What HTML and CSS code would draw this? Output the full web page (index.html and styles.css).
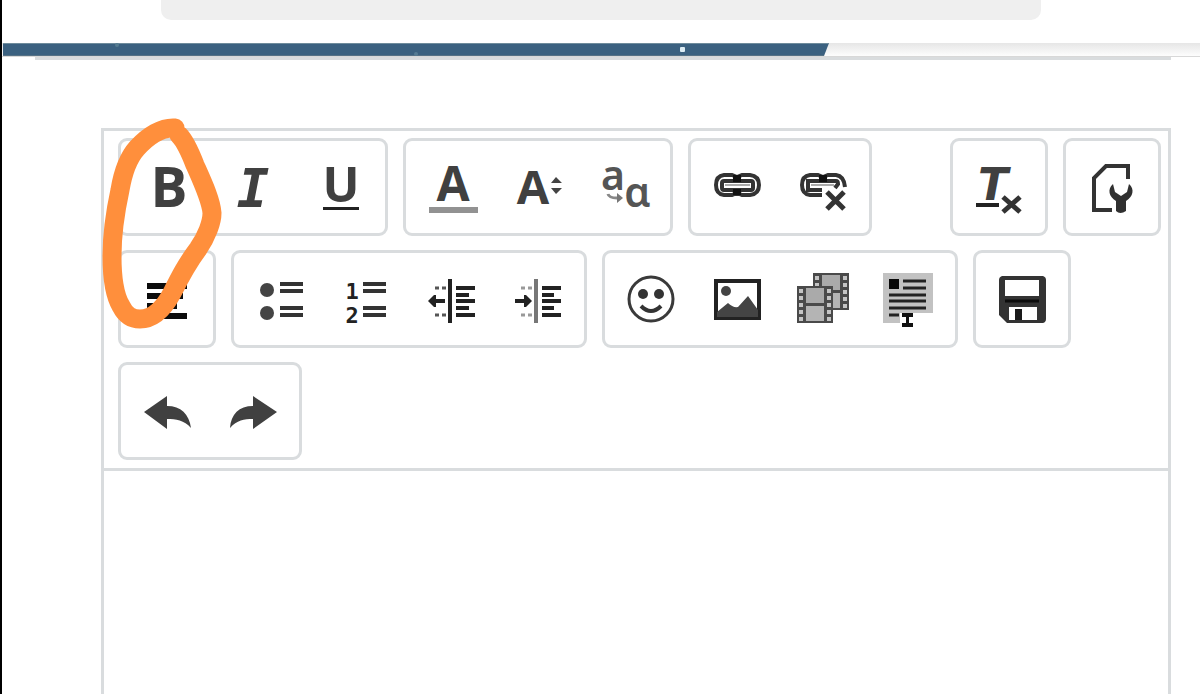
FILE: index.html
```html
<!DOCTYPE html>
<html lang="en">
<head>
    <meta charset="UTF-8">
    <meta name="viewport" content="width=device-width, initial-scale=1.0">
    <title>Editor</title>
    <link rel="stylesheet" href="styles.css">
</head>
<body>
    <header>
        <div class="panel"></div>
        <div class="banner">
            <svg class="banner-art" viewBox="0 0 828 13">
                <path d="M1 0H827L822 13H1z" fill="#3b6180"/>
                <path d="M1 0H827V1H1z" fill="#6f8c9c"/>
                <path d="M1 12H822V13H1z" fill="#567286"/>
                <circle cx="414" cy="11" r="2" fill="#557b93"/>
                <circle cx="115" cy="2" r="2" fill="#567d91"/>
                <rect x="678" y="4" width="5" height="5" rx="1" fill="#dcecf3"/>
            </svg>
        </div>
        <hr>
    </header>
    <main class="editor">
        <div class="toolbar">
            <div class="row">
                <div class="group">
                    <button type="button" aria-label="Bold">
                        <svg viewBox="0 0 50 50"><text class="letter" x="27" y="45" font-size="55">B</text></svg>
                    </button>
                    <button type="button" aria-label="Italic">
                        <svg viewBox="0 0 50 50"><text class="letter italic" x="25" y="45" font-size="54">I</text></svg>
                    </button>
                    <button type="button" aria-label="Underline">
                        <svg viewBox="0 0 50 50">
                            <text class="letter" x="27" y="40" font-size="49">U</text>
                            <rect x="9" y="45" width="36" height="3"/>
                        </svg>
                    </button>
                </div>
                <div class="group">
                    <button type="button" aria-label="Text color">
                        <svg viewBox="0 0 50 50">
                            <text class="letter" x="26" y="39" font-size="48">A</text>
                            <rect x="2" y="45" width="49" height="6" fill="#929292"/>
                        </svg>
                    </button>
                    <button type="button" aria-label="Font size">
                        <svg viewBox="0 0 50 50">
                            <text class="letter" x="20" y="42" font-size="47">A</text>
                            <path d="M38 21l5-6 6 6zM38 26h11l-6 6z" fill="#444"/>
                        </svg>
                    </button>
                    <button type="button" aria-label="Font family">
                        <svg viewBox="0 0 50 50">
                            <text class="letter medium" x="14" y="28" font-size="41">a</text>
                            <text class="letter medium" x="38" y="45" font-size="41">ɑ</text>
                            <path d="M9 32Q10 36 18 36" fill="none" stroke="#888" stroke-width="3"/>
                            <path d="M18 31v10l6-5z" fill="#777"/>
                        </svg>
                    </button>
                </div>
                <div class="group">
                    <button type="button" aria-label="Insert link">
                        <svg viewBox="0 0 50 50">
                            <g fill="none" stroke="#333" stroke-width="4">
                                <path d="M25 15L20 13H12Q4 14 4 23T12 33H20L25 31L30 33H38Q47 32 47 23T38 13H30z"/>
                                <rect x="10" y="19" width="31" height="9" rx="2"/>
                            </g>
                            <path d="M13 23H38" stroke="#aaa" stroke-width="2"/>
                            <path d="M21 13h8v7h-8zM21 27h8v6h-8z" fill="#111"/>
                        </svg>
                    </button>
                    <button type="button" aria-label="Unlink">
                        <svg viewBox="0 0 50 50">
                            <g fill="none" stroke="#333" stroke-width="4">
                                <path d="M24 33H12Q4 32 4 23T12 13H20L25 15L30 13H38Q46 14 47 25"/>
                                <path d="M24 28H10V19H38Q40 19 40 22L37 26"/>
                            </g>
                            <path d="M13 23H36" stroke="#aaa" stroke-width="2"/>
                            <path d="M21 13h8v7h-8z" fill="#111"/>
                            <path d="M29 30L46 47M46 30L29 47" stroke="#333" stroke-width="5"/>
                        </svg>
                    </button>
                </div>
                <div class="group push">
                    <button type="button" aria-label="Remove formatting">
                        <svg viewBox="0 0 50 50">
                            <text class="letter slanted" x="19" y="38" font-size="44">T</text>
                            <rect x="2" y="41" width="23" height="4"/>
                            <path d="M29 35L46 50M46 35L29 50" stroke="#333" stroke-width="5"/>
                        </svg>
                    </button>
                </div>
                <div class="group">
                    <button type="button" aria-label="View source">
                        <svg viewBox="0 0 50 50">
                            <path d="M25 48H7V16L19 4H41V17" fill="none" stroke="#333" stroke-width="4"/>
                            <path d="M26 22C20 27 22 35 29 39V49Q33 53 39 49V39C46 35 48 27 42 22L40 30L34 34L28 30z" fill="#303030"/>
                        </svg>
                    </button>
                </div>
            </div>
            <div class="row">
                <div class="group">
                    <button type="button" aria-label="Alignment">
                        <svg viewBox="0 0 50 50"><path d="M5 9h40v6H5zM5 19h36v6H5zM5 29h30v6H5zM5 39h40v6H5z" fill="#0c0c0c"/></svg>
                    </button>
                </div>
                <div class="group">
                    <button type="button" aria-label="Bulleted list">
                        <svg viewBox="0 0 50 50">
                            <circle cx="12" cy="16" r="7" fill="#444"/>
                            <circle cx="12" cy="39" r="7" fill="#444"/>
                            <path d="M25 10H48M25 17H48M25 34H48M25 41H48" stroke="#333" stroke-width="4"/>
                        </svg>
                    </button>
                    <button type="button" aria-label="Numbered list">
                        <svg viewBox="0 0 50 50">
                            <text class="number" x="11" y="25">1</text>
                            <text class="number" x="11" y="49">2</text>
                            <path d="M22 10H45M22 17H45M22 34H45M22 41H45" stroke="#333" stroke-width="4"/>
                        </svg>
                    </button>
                    <button type="button" aria-label="Decrease indent">
                        <svg viewBox="0 0 50 50">
                            <path d="M23 5V49" stroke="#222" stroke-width="4"/>
                            <path d="M29 14H48M29 27H48M29 41H48M29 21H42M29 34H42" stroke="#222" stroke-width="4"/>
                            <path d="M8 14h4M15 14h4M8 41h4M15 41h4" stroke="#555" stroke-width="3"/>
                            <path d="M5 27H18" stroke="#222" stroke-width="4"/>
                            <path d="M1 27l6-6h2v12H7z" fill="#222"/>
                        </svg>
                    </button>
                    <button type="button" aria-label="Increase indent">
                        <svg viewBox="0 0 50 50">
                            <path d="M23 5V49" stroke="#777" stroke-width="4"/>
                            <path d="M29 14H48M29 27H48M29 41H48M29 21H41M29 34H41" stroke="#222" stroke-width="4"/>
                            <path d="M8 14h4M15 14h4M8 41h4M15 41h4" stroke="#999" stroke-width="3"/>
                            <path d="M2 27H15" stroke="#222" stroke-width="4"/>
                            <path d="M19 27l-6-6h-2v12h2z" fill="#222"/>
                        </svg>
                    </button>
                </div>
                <div class="group">
                    <button type="button" aria-label="Emoticons">
                        <svg viewBox="0 0 50 50">
                            <circle cx="25" cy="25" r="22" fill="none" stroke="#3a3a3a" stroke-width="3"/>
                            <circle cx="17" cy="20" r="5" fill="#333"/>
                            <circle cx="33" cy="20" r="5" fill="#333"/>
                            <path d="M15 32Q25 42 35 32" fill="none" stroke="#333" stroke-width="4"/>
                        </svg>
                    </button>
                    <button type="button" aria-label="Insert image">
                        <svg viewBox="0 0 50 50">
                            <rect x="4" y="7" width="43" height="37" fill="#fff" stroke="#222" stroke-width="4"/>
                            <circle cx="14" cy="17" r="5" fill="#444"/>
                            <path d="M5 43V38L16 29Q21 34 26 33L36 22L46 36V43z" fill="#444"/>
                        </svg>
                    </button>
                    <button type="button" aria-label="Insert video">
                        <svg viewBox="0 0 50 50">
                            <defs>
                                <g id="film">
                                    <rect width="36" height="37" fill="#4a4a4a"/>
                                    <rect x="9" y="2" width="18" height="15" fill="#aaa"/>
                                    <rect x="9" y="20" width="18" height="15" fill="#b4b4b4"/>
                                    <path d="M4 3V36M32 3V36" stroke="#c4c4c4" stroke-width="4" stroke-dasharray="4 3"/>
                                </g>
                            </defs>
                            <use href="#film" x="15" y="-1"/>
                            <use href="#film" x="-1" y="12"/>
                        </svg>
                    </button>
                    <button type="button" aria-label="Insert article">
                        <svg viewBox="0 0 50 50">
                            <path d="M-1-1H49V39H16V49H-1z" fill="#c2c2c2"/>
                            <rect x="5" y="5" width="10" height="10" fill="#080808"/>
                            <path d="M19 7H42M19 14H42M5 21H42M5 27H42M5 34H42M5 41H15" stroke="#222" stroke-width="3"/>
                            <path d="M18 39h11v4h-4v6h4v4H18v-4h4v-6h-4z" fill="#111"/>
                        </svg>
                    </button>
                </div>
                <div class="group">
                    <button type="button" aria-label="Save draft">
                        <svg viewBox="0 0 50 50">
                            <path d="M5 2H46Q49 3 49 6V45Q49 48 46 49H10L2 41V6Q2 3 5 2z" fill="#333"/>
                            <rect x="8" y="6" width="34" height="16" fill="#fff"/>
                            <path d="M8 27H42" stroke="#0c0c0c" stroke-width="3"/>
                            <rect x="12" y="33" width="28" height="13" fill="#fff"/>
                            <rect x="18" y="35" width="7" height="11" fill="#1a1a1a"/>
                        </svg>
                    </button>
                </div>
            </div>
            <div class="row">
                <div class="group">
                    <button type="button" aria-label="Undo">
                        <svg viewBox="0 0 50 50"><path d="M2 26L25 10V20C39 20 47 28 49 42C42 34 34 33 25 33V43z" fill="#404040"/></svg>
                    </button>
                    <button type="button" aria-label="Redo">
                        <svg viewBox="0 0 50 50"><path d="M49 26L25 10V20C11 20 3 28 2 42C9 34 16 33 25 33V43z" fill="#404040"/></svg>
                    </button>
                </div>
            </div>
        </div>
        <textarea aria-label="Message"></textarea>
        <svg class="marker" viewBox="0 0 130 220">
            <path d="M74 10C61 9 47 18 36 30C27 40 22 54 19 72C14 95 11 117 11 138C11 160 14 178 20 188C25 198 31 201 39 201C53 201 64 188 71 175C79 159 85 147 97 131C106 118 111 104 111 95C110 82 102 65 94 47C89 34 83 22 78 17"/>
        </svg>
    </main>
</body>
</html>
```
FILE: styles.css
```css
* {
    box-sizing: border-box;
}

body {
    display: flex;
    flex-direction: column;
    min-height: 100vh;
    margin: 0;
    border-left: 2px solid #000;
    background: #fff;
    font-family: "Open Sans", "Noto Sans", sans-serif;
}

.panel {
    height: 20px;
    margin: 0 159px;
    border-radius: 0 0 10px 10px;
    background: #efefef;
}

.banner {
    height: 14px;
    margin-top: 23px;
    border-bottom: 1px solid #d8d8d8;
    background: linear-gradient(#e6e6e6, #fdfdfd);
}

.banner-art {
    display: block;
    width: 828px;
    height: 13px;
}

hr {
    height: 3px;
    margin: 0 29px 0 33px;
    border: 0;
    background: #d9dcde;
}

.editor {
    position: relative;
    display: flex;
    flex: 1;
    flex-direction: column;
    margin: 68px 29px 0 99px;
    border: 3px solid #d9dcde;
    border-bottom: 0;
}

.toolbar {
    display: flex;
    flex-direction: column;
    gap: 14px;
    padding: 7px 7px 8px 14px;
    border-bottom: 3px solid #d9dcde;
}

.row {
    display: flex;
    gap: 15px;
}

.group {
    display: flex;
    padding: 3px;
    border: 3px solid #d9dcde;
    border-radius: 9px;
}

.push {
    margin-left: auto;
}

button {
    display: flex;
    align-items: center;
    justify-content: center;
    width: 86px;
    height: 86px;
    padding: 0;
    border: 0;
    background: none;
    cursor: pointer;
}

button svg {
    width: 50px;
    height: 50px;
    overflow: visible;
    fill: #222;
}

.letter {
    font-family: "Open Sans", "Noto Sans", sans-serif;
    font-weight: 700;
    text-anchor: middle;
    fill: #404040;
}

.italic {
    font-family: "DejaVu Sans Mono", monospace;
    font-style: italic;
}

.slanted {
    font-family: "DejaVu Sans", sans-serif;
    font-style: italic;
}

.medium {
    font-family: "Noto Sans", sans-serif;
    font-weight: 600;
    fill: #555;
}

.number {
    font-family: "DejaVu Sans Mono", monospace;
    font-size: 22px;
    font-weight: 700;
    text-anchor: middle;
}

textarea {
    flex: 1;
    width: 100%;
    padding: 14px;
    border: 0;
    outline: 0;
    background: #fff;
    font-size: 40px;
    resize: none;
}

/* hand drawn ring around the bold button */
.marker {
    position: absolute;
    top: -13px;
    left: -3px;
    width: 130px;
    height: 220px;
    overflow: visible;
    pointer-events: none;
    fill: none;
    stroke: #ff8f3c;
    stroke-width: 19px;
    stroke-linecap: round;
    stroke-linejoin: round;
}
```
